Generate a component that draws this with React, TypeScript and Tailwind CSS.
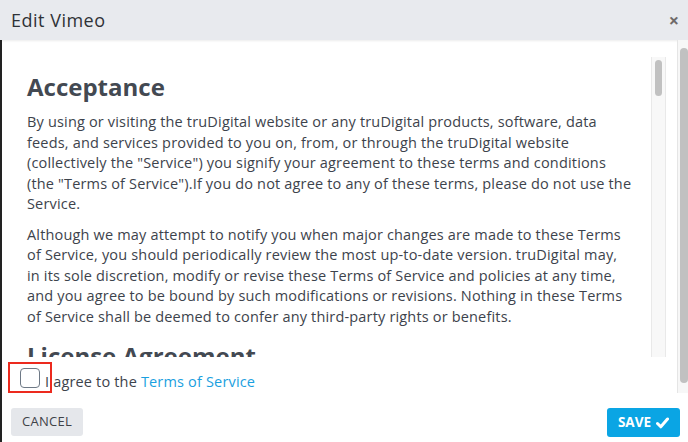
const para1 = [
  "By using or visiting the truDigital website or any truDigital products, software, data",
  "feeds, and services provided to you on, from, or through the truDigital website",
  '(collectively the "Service") you signify your agreement to these terms and conditions',
  '(the "Terms of Service").If you do not agree to any of these terms, please do not use the',
  "Service.",
];

const para2 = [
  "Although we may attempt to notify you when major changes are made to these Terms",
  "of Service, you should periodically review the most up-to-date version. truDigital may,",
  "in its sole discretion, modify or revise these Terms of Service and policies at any time,",
  "and you agree to be bound by such modifications or revisions. Nothing in these Terms",
  "of Service shall be deemed to confer any third-party rights or benefits.",
];

function Lines({ lines }: { lines: string[] }) {
  return (
    <div className="text-[14.5px] leading-[20.5px] tracking-[0.17px] text-[#3d434c]">
      {lines.map((l) => (
        <div key={l} className="whitespace-nowrap">
          {l}
        </div>
      ))}
    </div>
  );
}

export default function App() {
  return (
    <div
      className="flex h-[442px] w-[688px] flex-col overflow-hidden bg-white"
      style={{ fontFamily: '"Open Sans", "Liberation Sans", sans-serif' }}
    >
      <header className="flex h-[40px] shrink-0 items-center justify-between bg-[#e8eaee] pl-[11px] pr-[9px] shadow-[0_1px_2px_rgba(0,0,0,0.08)]">
        <span className="text-[18px] font-medium tracking-[0.5px] text-[#2f3237]">Edit Vimeo</span>
        <span className="text-[18px] font-bold leading-none text-[#6f6a6a]">×</span>
      </header>

      <div className="flex h-[353px] border-l-2 border-[#222]">
        <div className="flex flex-1 flex-col">
          <div className="ml-[9px] mt-[17px] flex h-[300px] w-[655px]">
            <div className="flex-1 overflow-hidden pl-[16px] pt-[15px]">
              <h2 className="text-[24px] font-bold leading-[30px] text-[#434952]">Acceptance</h2>
              <div className="mt-[10px]">
                <Lines lines={para1} />
              </div>
              <div className="mt-[10px]">
                <Lines lines={para2} />
              </div>
              <h2 className="mt-[14px] text-[24px] font-bold leading-[30px] text-[#434952]">
                License Agreement
              </h2>
            </div>
            <div className="w-[15px] border-x border-[#e9e9e9] bg-[#f8f8f8] px-[3px] pt-[3px]">
              <div className="h-[36px] rounded-full bg-[#c1c1c1]" />
            </div>
          </div>
          <div className="ml-[6px] mt-[5px] flex items-center">
            <div className="flex h-[31px] w-[44px] items-center justify-center border-2 border-[#ec2a1e]">
              <div className="h-[20px] w-[20px] rounded-[4px] border border-[#6e7986] bg-white" />
            </div>
            <span className="-ml-[7px] mt-[8px] text-[14.5px] tracking-[0.17px] text-[#3d434c]">
              I agree to the <span className="text-[#1aa0e0]">Terms of Service</span>
            </span>
          </div>
        </div>
        <div className="ml-[11px] w-[11px] border-l border-[#e5e5e5] bg-[#f7f7f7] pt-[8px] pl-[2px]">
          <div className="h-[335px] rounded-full bg-[#c1c1c1]" />
        </div>
      </div>

      <footer className="flex flex-1 items-start justify-between border-l-2 border-[#222] pl-[9px] pr-[8px] pt-[15px]">
        <button className="h-[28px] rounded-[3px] bg-[#e5e7eb] px-[11px] text-[13px] font-medium tracking-[0.3px] text-[#3f4248]">
          CANCEL
        </button>
        <button className="flex h-[29px] items-center gap-[5px] rounded-[3px] bg-[#0aa5e4] px-[11px] text-[13.5px] font-bold text-white">
          SAVE
          <svg width="13" height="12" viewBox="0 0 13 12" fill="none">
            <path d="M1.5 6.5 L4.8 9.8 L11.5 2" stroke="white" strokeWidth="3" strokeLinecap="round" strokeLinejoin="round" />
          </svg>
        </button>
      </footer>
    </div>
  );
}
